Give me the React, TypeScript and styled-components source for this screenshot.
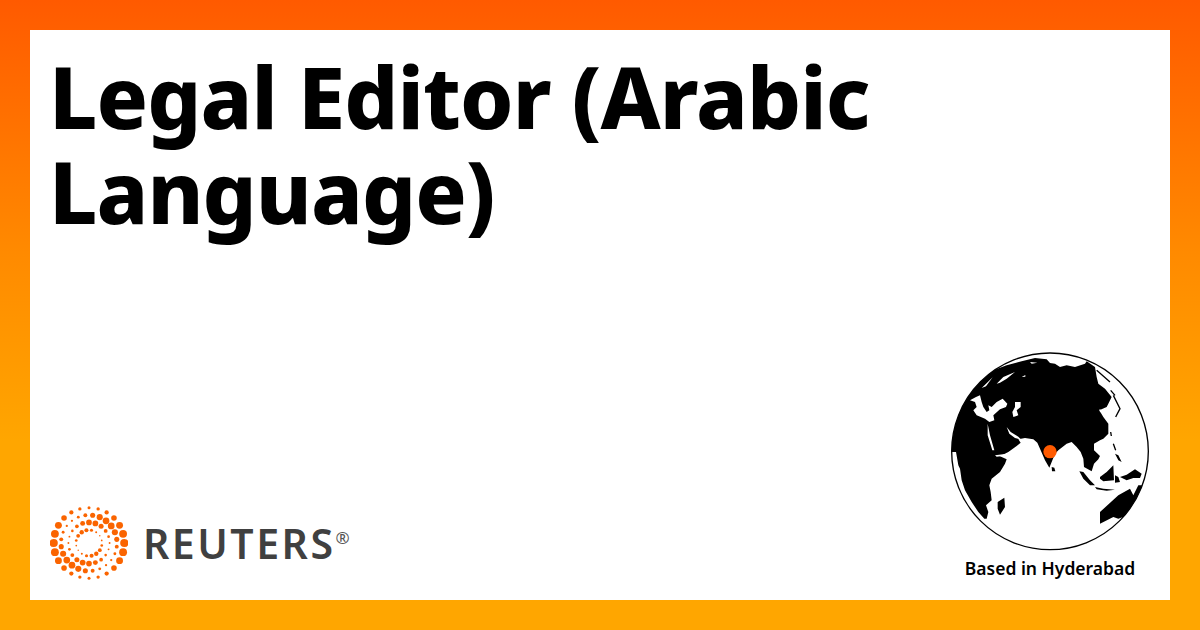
import { FC } from 'react';
import styled, { createGlobalStyle } from 'styled-components';

const GlobalStyle = createGlobalStyle`
   html, body {
      margin: 0;
      padding: 0;
   }
`;

const Page = styled.div`
   box-sizing: border-box;
   width: 1200px;
   height: 630px;
   padding: 30px;
   background: linear-gradient(180deg, #ff5a00 0%, #ff8a00 40%, #ffa600 70%, #ffa600 100%);
   font-family: "Noto Sans", "Open Sans", sans-serif;
`;

const Card = styled.div`
   display: flex;
   flex-direction: column;
   justify-content: space-between;
   box-sizing: border-box;
   height: 570px;
   padding: 19px 20px 0;
   background: #fff;
`;

const Title = styled.h1`
   margin: 0 0 0 -1px;
   width: 900px;
   font-size: 85px;
   line-height: 95px;
   font-weight: 800;
   letter-spacing: -0.9px;
   color: #000;
`;

const Footer = styled.div`
   display: flex;
   justify-content: space-between;
   align-items: flex-end;
`;

const Brand = styled.div`
   display: flex;
   align-items: center;
   gap: 15px;
   margin-bottom: 20px;
`;

const Wordmark = styled.span`
   font-family: "Noto Sans", sans-serif;
   font-size: 41px;
   line-height: 40px;
   font-weight: 600;
   letter-spacing: 2.5px;
   color: #404040;
`;

const Reg = styled.sup`
   font-size: 17px;
   line-height: 0;
   font-weight: 400;
   letter-spacing: 0;
   vertical-align: 15px;
   color: #555;
`;

const Location = styled.div`
   display: flex;
   flex-direction: column;
   align-items: center;
   gap: 5px;
   margin-bottom: 21px;
`;

const Label = styled.div`
   font-size: 17.5px;
   line-height: 22px;
   font-weight: 600;
   color: #000;
`;

const RINGS = [
   { r: 35.3, count: 24, base: 1.5, amp: 2.6, phase: 0, offset: 0 },
   { r: 28, count: 24, base: 1.1, amp: 2.3, phase: 45, offset: 7.5 },
   { r: 20.6, count: 20, base: 0.9, amp: 2.0, phase: 80, offset: 0 },
   { r: 13, count: 16, base: 0.7, amp: 1.5, phase: 120, offset: 11 },
];

const ReutersMark: FC = () => (
   <svg width="78" height="74" viewBox="-39 -37 78 74">
      {RINGS.map((ring, i) =>
         Array.from({ length: ring.count }, (_, n) => {
            const deg = (n * 360) / ring.count + ring.offset;
            const rad = (deg * Math.PI) / 180;
            const size = ring.base + ring.amp * Math.cos(((deg + ring.phase) * Math.PI) / 180) ** 2;
            return (
               <circle
                  key={`${i}-${n}`}
                  cx={ring.r * Math.cos(rad)}
                  cy={ring.r * Math.sin(rad)}
                  r={size}
                  fill="#fa6400"
               />
            );
         })
      )}
   </svg>
);

// traced by hand from the reference, drawn at 3x
const Globe: FC = () => (
   <svg width="200" height="200" viewBox="0 0 600 600">
      <defs>
         <clipPath id="disc">
            <circle cx="300" cy="298" r="295" />
         </clipPath>
      </defs>
      <circle cx="300" cy="298" r="296" fill="#fff" />
      <g clipPath="url(#disc)">
         <path
            fill="#000"
            d="M110 500 L115 480 L108 460 L125 445 L122 420 L118 400 L125 380 L150 360 L165 335 L170 322 L150 313 L175 300 L200 282 L212 272 L205 262 L225 258 L250 262 L262 272 L272 295 L285 325 L298 347 L305 330 L315 305 L325 295 L350 275 L365 270 L380 285 L392 300 L400 320 L402 345 L425 358 L432 335 L445 322 L450 312 L432 295 L432 275 L450 265 L460 260 L475 245 L475 215 L460 195 L448 175 L470 165 L475 155 L485 135 L465 110 L445 95 L440 75 L435 45 L410 28 L405 35 L375 45 L350 40 L330 45 L315 35 L300 33 L290 22 L255 18 L215 28 L170 40 L90 70 L10 170 L0 260 L0 300 L18 300 L25 340 L30 350 L35 385 L45 415 L65 450 L85 480 L103 500 Z"
         />
         <path
            fill="#000"
            d="M143 450 L163 437 L165 465 L150 488 L143 470 Z M305 345 L313 347 L316 358 L306 358 Z M388 358 L400 360 L420 385 L435 400 L420 400 L400 380 Z M435 405 L460 410 L495 413 L470 416 L440 412 Z M450 375 L470 360 L490 340 L492 385 L460 388 L450 380 Z M495 370 L505 375 L510 390 L495 392 Z M510 375 L530 368 L555 352 L575 365 L570 378 L550 378 L530 385 Z M450 515 L450 480 L505 430 L540 410 L550 430 L565 400 L600 400 L600 450 L545 485 L505 500 L490 495 Z M495 305 L505 310 L515 330 L505 325 Z"
         />
         <path
            fill="#fff"
            d="M70 175 L80 190 L105 200 L118 210 L133 205 L130 190 L150 172 L168 165 L172 155 L158 140 L140 150 L125 165 L115 160 L118 175 L110 180 L100 165 L95 150 L90 130 L78 135 L60 145 L75 150 L80 165 Z M195 150 L212 150 L212 165 L200 175 L205 190 L190 195 L187 180 L195 165 Z M113 215 L120 250 L133 295 L127 295 L113 250 Z M170 225 L182 240 L205 254 L214 263 L195 258 L178 245 Z M135 310 L165 306 L165 311 L140 314 Z M140 95 L160 75 L195 60 L170 80 L150 92 Z M215 75 L226 69 L226 74 Z M240 30 L262 32 L245 35 Z M448 172 L465 178 L462 183 L450 180 Z M95 108 L128 76 L108 103 Z"
         />
         <path
            fill="none"
            stroke="#000"
            strokeWidth="4"
            d="M440 55 L480 90 M482 115 L495 130 M490 130 L510 170 L497 195 M482 240 L484 252 M490 275 L497 295"
         />
      </g>
      <circle cx="300" cy="298" r="295" fill="none" stroke="#000" strokeWidth="4" />
      <circle cx="300" cy="299" r="20" fill="#ff5a00" />
   </svg>
);

const App: FC = () => (
   <Page>
      <GlobalStyle />
      <Card>
         <Title>Legal Editor (Arabic Language)</Title>
         <Footer>
            <Brand>
               <ReutersMark />
               <Wordmark>
                  REUTERS<Reg>®</Reg>
               </Wordmark>
            </Brand>
            <Location>
               <Globe />
               <Label>Based in Hyderabad</Label>
            </Location>
         </Footer>
      </Card>
   </Page>
);

export default App;
